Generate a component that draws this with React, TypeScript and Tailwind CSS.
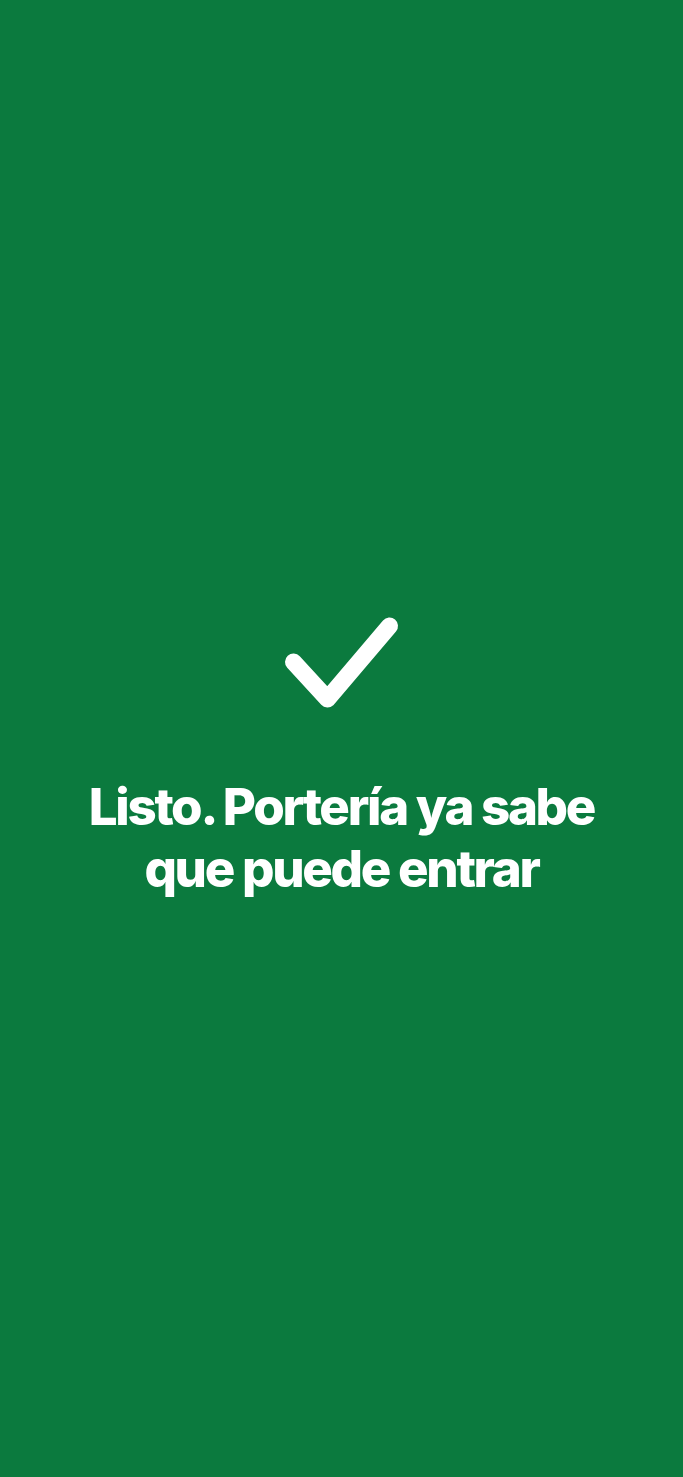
import React from 'react';

const App: React.FC = () => {
  return (
    <div className="min-h-screen w-full bg-[#0b7a3e] flex flex-col items-center justify-center pt-[32px] font-['Inter',sans-serif]">
      <svg width="130" height="105" viewBox="0 0 130 105" fill="none" className="mb-[62px]">
        <path
          d="M16.5 53 L50.5 90 L112.5 17"
          stroke="white"
          strokeWidth="17"
          strokeLinecap="round"
          strokeLinejoin="round"
        />
      </svg>
      <h1 className="text-white text-[51px] leading-[62px] font-extrabold tracking-[-0.045em] text-center px-2">
        Listo. Portería ya sabe
        <br />
        que puede entrar
      </h1>
    </div>
  );
};

export default App;
